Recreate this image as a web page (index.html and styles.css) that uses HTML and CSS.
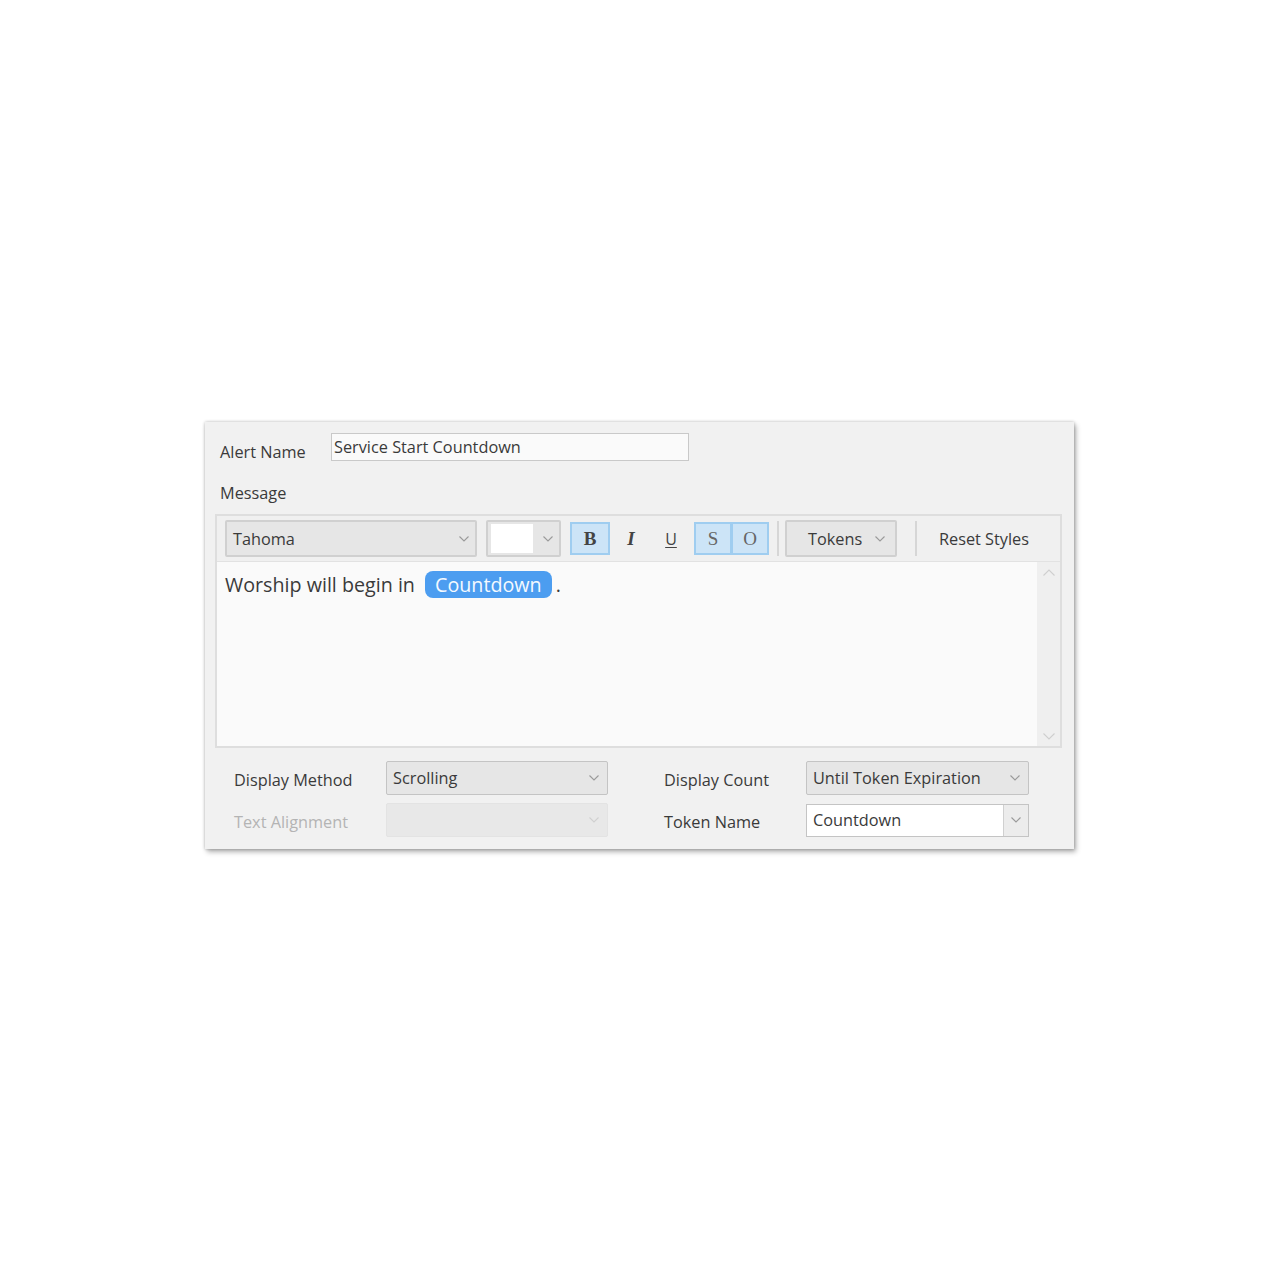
FILE: index.html
```html
<!DOCTYPE html>
<html lang="en">
  <head>
    <meta charset="UTF-8" />
    <meta name="viewport" content="width=device-width, initial-scale=1.0" />
    <title>Alert Editor</title>
    <link rel="stylesheet" href="styles.css">
  </head>

  <body>
    <div class="alert-dialog">
      <div class="name-row">
        <label class="field-label name-label" for="alertName">Alert Name</label>
        <input type="text" id="alertName" class="text-input" value="Service Start Countdown" />
      </div>

      <div class="message-label">Message</div>

      <div class="editor">
        <div class="toolbar">
          <div class="combo font-combo">
            <span>Tahoma</span>
            <svg class="chevron" viewBox="0 0 10 6"><polyline points="0.5,0.5 5,5 9.5,0.5" /></svg>
          </div>

          <div class="combo color-combo">
            <span class="swatch"></span>
            <svg class="chevron" viewBox="0 0 10 6"><polyline points="0.5,0.5 5,5 9.5,0.5" /></svg>
          </div>

          <button class="fmt-btn active bold">B</button>
          <button class="fmt-btn italic">I</button>
          <button class="fmt-btn underline">U</button>
          <div class="btn-pair">
            <button class="fmt-btn active">S</button>
            <button class="fmt-btn active">O</button>
          </div>

          <span class="separator"></span>

          <div class="combo tokens-combo">
            <span>Tokens</span>
            <svg class="chevron" viewBox="0 0 10 6"><polyline points="0.5,0.5 5,5 9.5,0.5" /></svg>
          </div>

          <span class="separator"></span>

          <button class="reset-btn">Reset Styles</button>
        </div>

        <div class="editor-body">
          <div class="message-text">
            Worship will begin in <span class="token-chip">Countdown</span><span class="period">.</span>
          </div>
          <div class="scrollbar">
            <svg class="scroll-arrow" viewBox="0 0 12 7"><polyline points="0.5,6.5 6,1 11.5,6.5" /></svg>
            <svg class="scroll-arrow" viewBox="0 0 12 7"><polyline points="0.5,0.5 6,6 11.5,0.5" /></svg>
          </div>
        </div>
      </div>

      <div class="options-grid">
        <span class="field-label">Display Method</span>
        <div class="combo option-combo">
          <span>Scrolling</span>
          <svg class="chevron" viewBox="0 0 10 6"><polyline points="0.5,0.5 5,5 9.5,0.5" /></svg>
        </div>
        <span class="field-label right-label">Display Count</span>
        <div class="combo option-combo">
          <span>Until Token Expiration</span>
          <svg class="chevron" viewBox="0 0 10 6"><polyline points="0.5,0.5 5,5 9.5,0.5" /></svg>
        </div>

        <span class="field-label disabled">Text Alignment</span>
        <div class="combo option-combo disabled">
          <span></span>
          <svg class="chevron" viewBox="0 0 10 6"><polyline points="0.5,0.5 5,5 9.5,0.5" /></svg>
        </div>
        <span class="field-label right-label">Token Name</span>
        <div class="editable-combo">
          <span class="editable-text">Countdown</span>
          <span class="editable-button">
            <svg class="chevron" viewBox="0 0 10 6"><polyline points="0.5,0.5 5,5 9.5,0.5" /></svg>
          </span>
        </div>
      </div>
    </div>
  </body>
</html>
```

FILE: styles.css
```css
body {
  margin: 0;
  padding: 422px 0 60px;
  background-color: #fff;
  font-family: "Open Sans", "Noto Sans", sans-serif;
  color: #3a3a3a;
}

.alert-dialog {
  margin-left: 205px;
  width: 869px;
  height: 427px;
  box-sizing: border-box;
  padding: 11px 12px 0 10px;
  background-color: #f1f1f1;
  box-shadow: 0 0 3px rgba(0, 0, 0, 0.25), 2px 3px 5px rgba(0, 0, 0, 0.3);
}

.name-row {
  display: flex;
  align-items: center;
  height: 28px;
}

.field-label {
  font-size: 16.3px;
  color: #3a3a3a;
  white-space: nowrap;
}

.field-label.disabled {
  color: #b4b4b4;
}

.name-label {
  width: 116px;
  padding-left: 5px;
  box-sizing: border-box;
  padding-top: 10px;
}

.text-input {
  width: 358px;
  height: 28px;
  box-sizing: border-box;
  border: 1px solid #c9c9c9;
  background-color: #fafafa;
  padding: 0 2px;
  font-family: "Open Sans", sans-serif;
  font-size: 16.3px;
  color: #3a3a3a;
  outline: none;
}

.message-label {
  font-size: 16.3px;
  padding: 21px 0 0 5px;
  height: 53px;
  box-sizing: border-box;
  line-height: 22px;
}

.editor {
  height: 234px;
  border: 2px solid #dedede;
  box-sizing: border-box;
  display: flex;
  flex-direction: column;
}

.toolbar {
  display: flex;
  align-items: center;
  height: 45px;
  padding: 0 8px;
  border-bottom: 1px solid #e2e2e2;
  background-color: #f0f0f0;
}

.combo {
  display: flex;
  align-items: center;
  justify-content: space-between;
  height: 37px;
  box-sizing: border-box;
  border: 2px solid #d0d0d0;
  border-radius: 2px;
  background-color: #e6e6e6;
  font-size: 16.3px;
  color: #3a3a3a;
}

.chevron {
  width: 10px;
  height: 6px;
  fill: none;
  stroke: #9a9a9a;
  stroke-width: 1.1;
}

.font-combo {
  width: 252px;
  padding: 0 6px 0 6px;
}

.color-combo {
  width: 75px;
  margin-left: 9px;
  padding: 0 6px 0 3px;
}

.swatch {
  width: 42px;
  height: 29px;
  background-color: #fff;
}

.fmt-btn {
  width: 40px;
  height: 33px;
  box-sizing: border-box;
  border: 1px solid transparent;
  background: none;
  padding: 0;
  font-family: "Liberation Serif", serif;
  font-size: 19px;
  color: #444;
  cursor: pointer;
}

.fmt-btn.active {
  background-color: #cce4f7;
  border: 2px solid #9fcdf0;
}

.fmt-btn.bold {
  margin-left: 9px;
  font-weight: bold;
}

.fmt-btn.italic {
  font-style: italic;
  font-weight: bold;
  margin-left: 1px;
}

.fmt-btn.underline {
  font-family: "Open Sans", sans-serif;
  font-size: 16px;
  text-decoration: underline;
  text-underline-offset: 2px;
}

.btn-pair {
  display: flex;
  margin-left: 3px;
}

.btn-pair .fmt-btn {
  width: 38px;
  color: #666;
}

.btn-pair .fmt-btn + .fmt-btn {
  margin-left: -1px;
}

.separator {
  width: 2px;
  height: 35px;
  background-color: #d6d6d6;
  margin: 0 6px 0 8px;
}

.tokens-combo {
  width: 112px;
  padding: 0 10px 0 21px;
}

.tokens-combo + .separator {
  margin: 0 10px 0 18px;
}

.reset-btn {
  border: none;
  background: none;
  font-family: "Open Sans", sans-serif;
  font-size: 16.3px;
  color: #3a3a3a;
  padding: 0 0 0 12px;
}

.editor-body {
  flex: 1;
  display: flex;
  background-color: #fafafa;
}

.message-text {
  flex: 1;
  padding: 8px 0 0 8px;
  font-size: 19.7px;
  color: #3a3a3a;
  line-height: 29px;
}

.token-chip {
  display: inline-block;
  background-color: #4c9df0;
  color: #f4f9ff;
  border-radius: 8px;
  padding: 0 10px;
  margin-left: 5px;
  line-height: 27px;
}

.period {
  margin-left: 4px;
}

.scrollbar {
  width: 23px;
  display: flex;
  flex-direction: column;
  justify-content: space-between;
  align-items: center;
  background-color: #efefef;
  padding: 7px 0 6px;
  box-sizing: border-box;
}

.scroll-arrow {
  width: 12px;
  height: 7px;
  fill: none;
  stroke: #cfcfcf;
  stroke-width: 1.1;
}

.options-grid {
  display: grid;
  grid-template-columns: 152px 222px 198px 223px;
  row-gap: 8px;
  align-items: center;
  padding: 13px 0 0 19px;
}

.options-grid .field-label {
  padding-top: 3px;
}

.options-grid .right-label {
  padding-left: 56px;
}

.option-combo {
  height: 34px;
  padding: 0 8px 0 6px;
  border-width: 1px;
  border-color: #c4c4c4;
}

.option-combo.disabled {
  background-color: #e8e8e8;
  border-color: #e3e3e3;
}

.option-combo.disabled .chevron {
  stroke: #d0d0d0;
}

.editable-combo {
  display: flex;
  height: 33px;
  box-sizing: border-box;
  border: 1px solid #c4c4c4;
  background-color: #fff;
  font-size: 16.3px;
}

.editable-text {
  flex: 1;
  display: flex;
  align-items: center;
  padding-left: 6px;
}

.editable-button {
  width: 24px;
  display: flex;
  align-items: center;
  justify-content: center;
  border-left: 1px solid #d0d0d0;
  background-color: #ececec;
}
```
